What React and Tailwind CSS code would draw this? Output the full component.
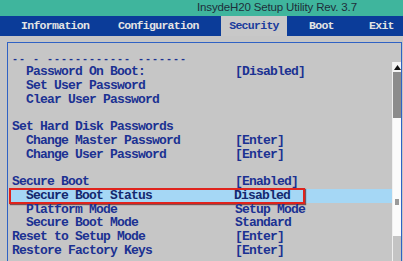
import React from "react";

const mono = { fontFamily: '"Liberation Mono", "DejaVu Sans Mono", monospace' };

const rows = [
  { label: "Password On Boot:", value: "[Disabled]", indent: true },
  { label: "Set User Password", indent: true },
  { label: "Clear User Password", indent: true },
  { label: "" },
  { label: "Set Hard Disk Passwords" },
  { label: "Change Master Password", value: "[Enter]", indent: true },
  { label: "Change User Password", value: "[Enter]", indent: true },
  { label: "" },
  { label: "Secure Boot", value: "[Enabled]" },
  { label: "Secure Boot Status", value: "Disabled", indent: true, selected: true },
  { label: "Platform Mode", value: "Setup Mode", indent: true },
  { label: "Secure Boot Mode", value: "Standard", indent: true },
  { label: "Reset to Setup Mode", value: "[Enter]" },
  { label: "Restore Factory Keys", value: "[Enter]" },
];

export default function App() {
  return (
    <div className="w-[403px] h-[261px] overflow-hidden bg-[#c6c6c6] flex flex-col">
      {/* Title bar */}
      <div className="h-[16px] bg-[#3fb59d] flex items-center pl-[197px]">
        <span
          className="text-[11.5px] leading-none text-[#1e2e3a] whitespace-nowrap tracking-[-0.15px]"
          style={{ fontFamily: '"Liberation Sans", Arial, sans-serif' }}
        >
          InsydeH20 Setup Utility Rev. 3.7
        </span>
      </div>
      {/* Tab bar */}
      <div
        className="h-[20px] bg-[#0b3c99] flex items-stretch text-[11.5px] tracking-[-0.7px] font-bold text-[#e4e4e4] whitespace-nowrap"
        style={mono}
      >
        <div className="w-[105px] pl-[21px] flex items-center">Information</div>
        <div className="w-[116px] pl-[13px] flex items-center">Configuration</div>
        <div className="w-[66px] bg-[#c8c8c8] text-[#1a3c9c] flex items-center justify-center">Security</div>
        <div className="w-[68px] pl-[22px] flex items-center">Boot</div>
        <div className="flex-1 pl-[14px] flex items-center">Exit</div>
      </div>
      {/* Gap */}
      <div className="h-[6px]" />
      {/* Panel */}
      <div className="ml-[7px] w-[395px] flex-1 border-t border-l border-r border-[#2f62c4] flex">
        <div
          className="flex-1 flex flex-col text-[13px] tracking-[-0.8px] font-bold text-[#1b3192]"
          style={mono}
        >
          <div className="mt-[12px] h-[10px] leading-[10px] text-[10px] tracking-[1px] pl-[4px] whitespace-pre">
            {"-- - ------------ -------"}
          </div>
          {rows.map((r, i) => (
            <div
              key={i}
              className={
                "relative h-[13.75px] leading-[13.75px] grid grid-cols-[227px_1fr] whitespace-pre " +
                (r.selected ? "bg-[#a5d7f5] ml-[1px] text-[#14286e]" : "")
              }
            >
              <div className={r.indent ? (r.selected ? "pl-[17px]" : "pl-[18px]") : "pl-[4px]"}>{r.label}</div>
              <div className={r.selected ? "-ml-[2px]" : ""}>{r.value || ""}</div>
              {r.selected && (
                <div className="absolute left-0 top-[-1px] w-[296px] h-[16px] border-2 border-[#e0231c] shadow-[1px_1px_1px_rgba(80,0,0,0.6)]" />
              )}
            </div>
          ))}
        </div>
        {/* Scrollbar */}
        <div className="w-[9px] mt-[19px] flex flex-col border-l border-[#f0f0f0]">
          <div className="h-[10px] bg-[#f4f4f4] flex items-center justify-center">
            <svg width="7" height="5" viewBox="0 0 7 5">
              <polygon points="3.5,0 7,5 0,5" fill="#111" />
            </svg>
          </div>
          <div className="h-[46px] bg-[#8c8c8c]" />
          <div className="h-[118px] bg-[#fbfbfb] relative">
            <div className="absolute left-[2px] top-[81px] w-[4px] h-[6px] bg-[#9a9a9a]" />
          </div>
          <div className="flex-1 bg-[#c4c4c4]" />
        </div>
      </div>
    </div>
  );
}
